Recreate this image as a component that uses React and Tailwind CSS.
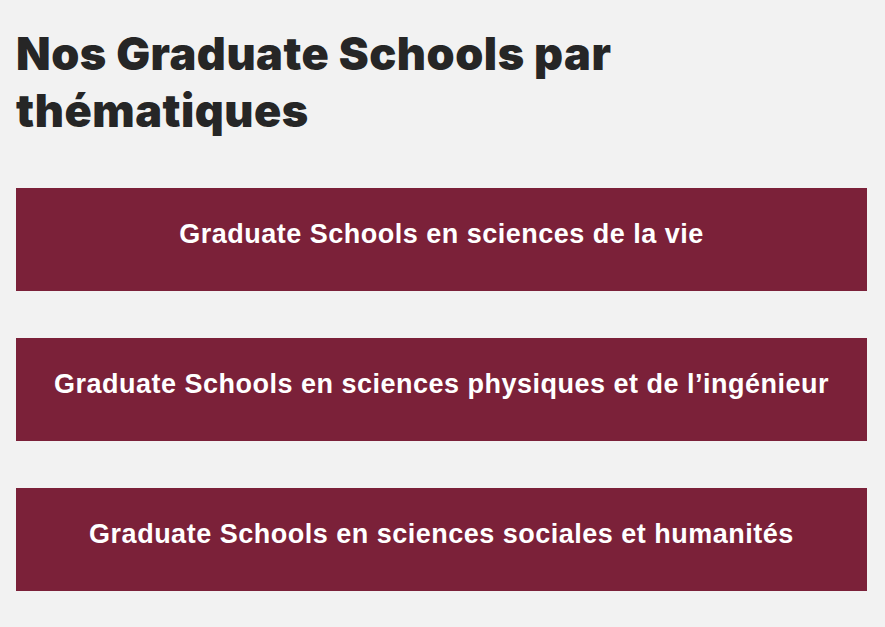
export default function App() {
  const items = [
    "Graduate Schools en sciences de la vie",
    "Graduate Schools en sciences physiques et de l’ingénieur",
    "Graduate Schools en sciences sociales et humanités",
  ];
  return (
    <div className="w-[885px] h-[627px] bg-[#f2f2f2] pl-4 pr-[18px] pt-[25px]">
      <h1 className="text-[45px] leading-[57px] font-black text-[#262626] tracking-[0.5px] max-w-[640px]" style={{ fontFamily: "Inter, 'Noto Sans', sans-serif" }}>
        Nos Graduate Schools par thématiques
      </h1>
      <div className="mt-[49px] flex flex-col gap-[47px]">
        {items.map((t) => (
          <div key={t} className="h-[103px] pb-[10px] bg-[#7b2139] flex items-center justify-center text-white font-bold text-[27px] tracking-[0.5px]" style={{ fontFamily: "'Liberation Sans', Arial, sans-serif" }}>
            {t}
          </div>
        ))}
      </div>
    </div>
  );
}
